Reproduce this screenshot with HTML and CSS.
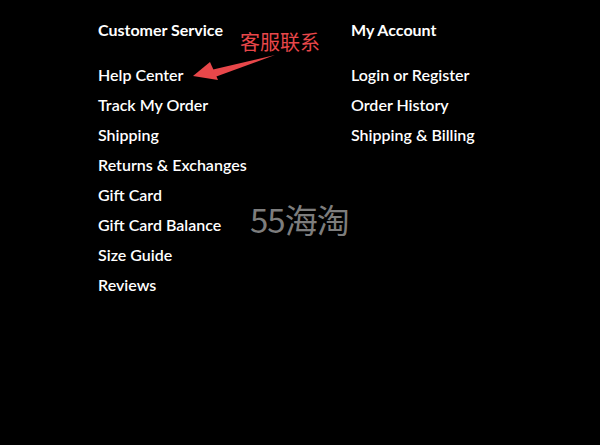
FILE: index.html
```html
<!DOCTYPE html>
<html lang="en">
<head>
<meta charset="utf-8">
<title>Footer</title>
<link rel="stylesheet" href="styles.css">
</head>
<body>
<div class="footer">
  <div class="col col-service">
    <h3 class="col-title">Customer Service</h3>
    <ul class="links">
      <li><a href="#">Help Center</a></li>
      <li><a href="#">Track My Order</a></li>
      <li><a href="#">Shipping</a></li>
      <li><a href="#">Returns &amp; Exchanges</a></li>
      <li><a href="#">Gift Card</a></li>
      <li><a href="#">Gift Card Balance</a></li>
      <li><a href="#">Size Guide</a></li>
      <li><a href="#">Reviews</a></li>
    </ul>
  </div>
  <div class="col col-account">
    <h3 class="col-title">My Account</h3>
    <ul class="links">
      <li><a href="#">Login or Register</a></li>
      <li><a href="#">Order History</a></li>
      <li><a href="#">Shipping &amp; Billing</a></li>
    </ul>
  </div>

  <div class="note">客服联系</div>
  <svg class="arrow" width="90" height="35" viewBox="0 0 90 35" aria-hidden="true">
    <path d="M3 26 L20 12 L28 30 Z" fill="#e8474a"/>
    <path d="M85 5 L21 20 L25 27 Z" fill="#e8474a"/>
  </svg>
  <div class="watermark">55海淘</div>
</div>
</body>
</html>
```
FILE: styles.css
```css
html, body {
  margin: 0;
  padding: 0;
  background: #000;
}
body {
  width: 600px;
  height: 445px;
  overflow: hidden;
  font-family: "Lato", "Liberation Sans", sans-serif;
  color: #fff;
}
.footer {
  position: relative;
  display: flex;
  padding: 20px 0 0 98px;
  height: 425px;
}
.col-service {
  width: 253px;
}
.col-title {
  margin: 0 0 20px 0;
  font-size: 16px;
  font-weight: 700;
  line-height: 20px;
  color: #fff;
}
.links {
  list-style: none;
  margin: 0;
  padding: 0;
}
.links li {
  line-height: 30px;
  height: 30px;
}
.links a {
  color: #fff;
  text-decoration: none;
  font-size: 16px;
  font-weight: 600;
}
.note {
  position: absolute;
  left: 240px;
  top: 30px;
  font-family: "Noto Sans CJK SC", sans-serif;
  font-size: 20px;
  line-height: 24px;
  color: #e8474a;
}
.arrow {
  position: absolute;
  left: 190px;
  top: 50px;
}
.watermark {
  position: absolute;
  left: 250px;
  top: 199px;
  font-family: "Noto Sans CJK SC", sans-serif;
  font-size: 33px;
  line-height: 40px;
  color: #7d7d7d;
  letter-spacing: -1px;
}
```
